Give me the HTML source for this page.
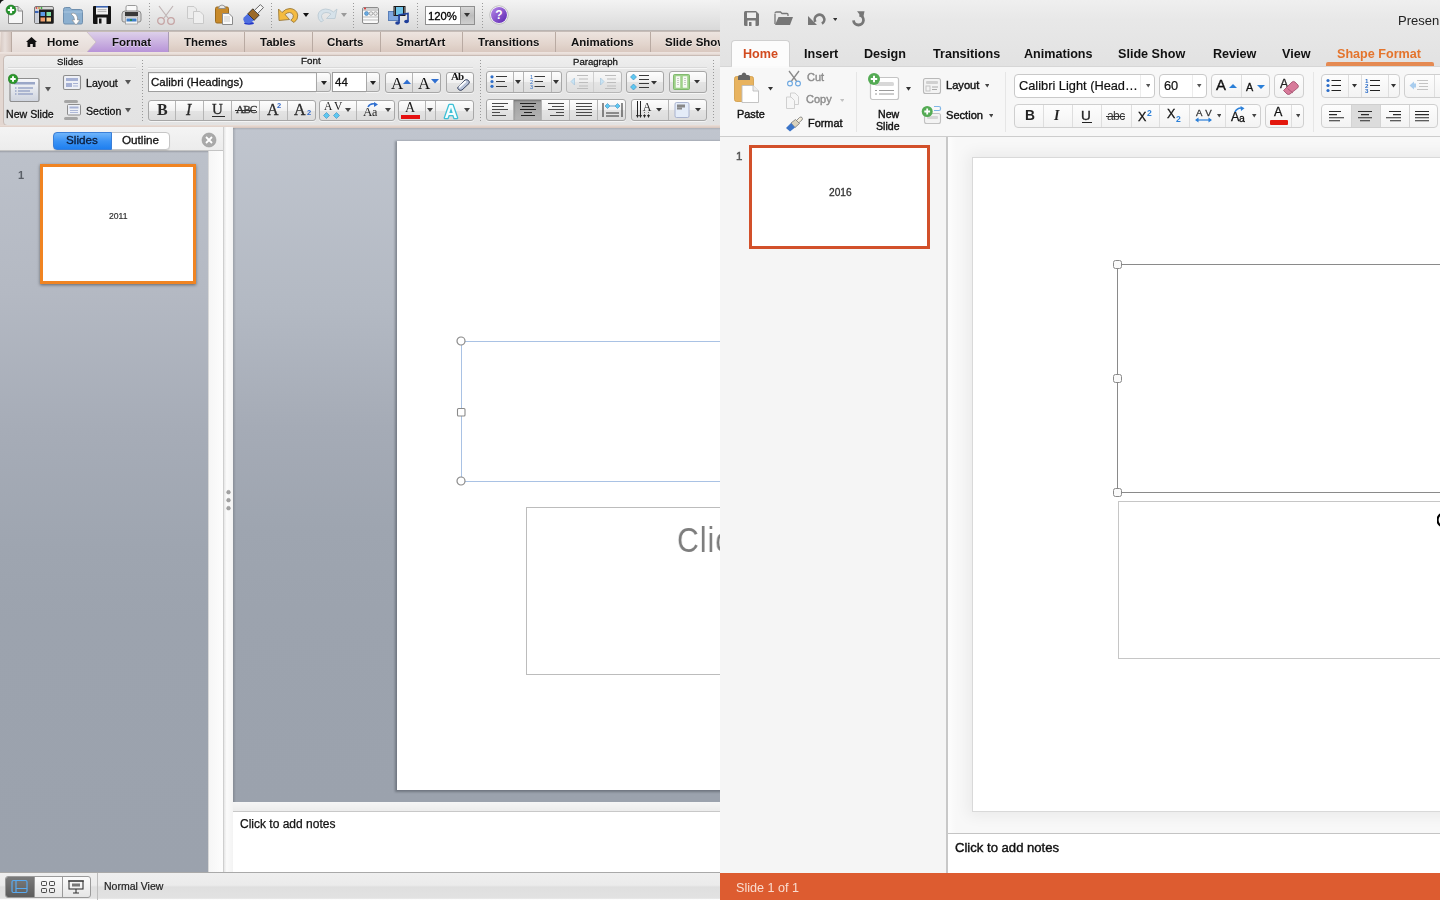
<!DOCTYPE html>
<html><head><meta charset="utf-8">
<style>
*{margin:0;padding:0;box-sizing:border-box}
html,body{width:1440px;height:900px;overflow:hidden;background:#fff;font-family:"Liberation Sans",sans-serif}
.a{position:absolute;display:block}
.t{position:absolute;white-space:nowrap;line-height:1;will-change:transform}
</style></head><body>
<div class="a" style="left:0;top:0;width:720px;height:900px;overflow:hidden">
<div class="a" style="left:0px;top:0px;width:720px;height:31px;background:linear-gradient(#f3f3f3,#e4e4e4 60%,#d9d9d9);border-bottom:1px solid #b9b4b2"></div>
<svg class="a" style="left:0px;top:0px;" width="4" height="4" viewBox="0 0 4 4"><path d="M0 0H4Q1 1 0 4Z" fill="#111"/></svg>
<svg class="a" style="left:5px;top:4px;" width="20" height="21" viewBox="0 0 20 21"><path d="M3.5 2.5H13L17.5 7V19.5H3.5Z" fill="#f6f6f6" stroke="#8a8a8a"/><path d="M13 2.5V7H17.5" fill="#ddd" stroke="#8a8a8a"/><circle cx="6" cy="6" r="5" fill="#22922a" stroke="#16661a" stroke-width=".5"/><path d="M6 2.8V9.2M2.8 6H9.2" stroke="#fff" stroke-width="2.2"/></svg>
<svg class="a" style="left:34px;top:6px;" width="20" height="18" viewBox="0 0 20 18"><rect x="0.5" y="0.5" width="19" height="17" rx="1.5" fill="#d8d8d8" stroke="#777"/><rect x="5" y="3.5" width="14.5" height="14" fill="#1b1b1b"/><rect x="1" y="4" width="3.5" height="13" fill="#c9cdd6"/><rect x="1" y="5" width="3.5" height="2" fill="#3a63b6"/><circle cx="2.5" cy="2" r="0.9" fill="#d44"/><circle cx="5" cy="2" r="0.9" fill="#c93"/><circle cx="7.5" cy="2" r="0.9" fill="#3a3"/><rect x="6.5" y="6" width="4.5" height="4" fill="#5b9be8"/><rect x="12.5" y="6" width="4.5" height="4" fill="#7fe0a8"/><rect x="6.5" y="11.5" width="4.5" height="4" fill="#f0a070"/><rect x="12.5" y="11.5" width="4.5" height="4" fill="#f8d090"/></svg>
<svg class="a" style="left:62px;top:5px;" width="22" height="21" viewBox="0 0 22 21"><path d="M1.5 4.5Q1.5 2.5 3.5 2.5H8L9.5 4.5H18.5Q20.5 4.5 20.5 6.5V17.5Q20.5 19 19 19H3Q1.5 19 1.5 17.5Z" fill="#8cb0d0" stroke="#6f8fae"/><path d="M1.5 7H20.5" stroke="#a9c6e0"/><path d="M11 8Q16 9 15.5 15H18L14 20L10 15H12.5Q12.5 11 9 9Z" fill="#fff" stroke="#888" stroke-width=".6"/></svg>
<svg class="a" style="left:92px;top:5px;" width="20" height="20" viewBox="0 0 20 20"><path d="M1 2Q1 1 2 1H18Q19 1 19 2V18Q19 19 18 19H2Q1 19 1 18Z" fill="#141414"/><rect x="4" y="1" width="12" height="8.5" fill="#f2f2f2"/><rect x="4" y="1" width="12" height="1.6" fill="#3d64b0"/><path d="M5.5 4.7H14.5M5.5 6.6H14.5" stroke="#9a9a9a" stroke-width=".8"/><rect x="5.5" y="12.5" width="9" height="6.5" fill="#e8e8e8"/><rect x="7" y="13.5" width="2.5" height="5" fill="#141414"/></svg>
<svg class="a" style="left:120px;top:4px;" width="23" height="22" viewBox="0 0 23 22"><rect x="6" y="1.5" width="11" height="6" rx="1.5" fill="#fafafa" stroke="#9a9a9a"/><path d="M2 10Q2 7 5 7H18Q21 7 21 10V16Q21 18 19 18H4Q2 18 2 16Z" fill="#d6d6d6" stroke="#8a8a8a"/><rect x="5" y="8" width="13" height="4" fill="#3a3a3a"/><rect x="5.5" y="13" width="12" height="7" fill="#f6f6f6" stroke="#888" stroke-width=".6"/><rect x="6.5" y="14.5" width="10" height="3" fill="#3f7fc9"/><circle cx="11" cy="16" r="1" fill="#2a8a2a"/></svg>
<div class="a" style="left:149px;top:3px;width:1px;height:26px;background:repeating-linear-gradient(#9a9a9a 0 1px,transparent 1px 3px)"></div>
<svg class="a" style="left:156px;top:5px;" width="20" height="20" viewBox="0 0 20 20"><path d="M3 1L12 13M17 1L8 13" stroke="#c0b5b5" stroke-width="1.2"/><circle cx="5" cy="16" r="3.3" fill="none" stroke="#c6a4a4" stroke-width="1.3"/><circle cx="15" cy="16" r="3.3" fill="none" stroke="#c6a4a4" stroke-width="1.3"/></svg>
<svg class="a" style="left:186px;top:5px;" width="19" height="20" viewBox="0 0 19 20"><path d="M1.5 1.5H8L10.5 4V13.5H1.5Z" fill="#ececec" stroke="#c9c9c9"/><path d="M7.5 6.5H14L17.5 10V18.5H7.5Z" fill="#efefef" stroke="#c9c9c9"/></svg>
<svg class="a" style="left:214px;top:4px;" width="20" height="21" viewBox="0 0 20 21"><rect x="1.5" y="3" width="13" height="16" rx="1.5" fill="#c88a2a" stroke="#9a6a1f"/><path d="M4.5 4.5Q5 1 8 1Q11 1 11.5 4.5Z" fill="#e9e9e9" stroke="#888" stroke-width=".8"/><path d="M8.5 9.5H15L18.5 13V20.5H8.5Z" fill="#f9f9f9" stroke="#8a8a8a"/><path d="M10 13H16M10 15H16M10 17H16" stroke="#bbb" stroke-width=".7"/></svg>
<svg class="a" style="left:242px;top:4px;" width="22" height="21" viewBox="0 0 22 21"><ellipse cx="7" cy="19.3" rx="5" ry="1.4" fill="#2236c8"/><path d="M5.8 9.8L12.2 16.2L7.5 19.5Q4 20 2 17.5Q0.5 15 1.8 13.5Z" fill="#4f6fe0"/><path d="M10.8 4.8L17.2 11.2L12.2 16.2L5.8 9.8Z" fill="#9c6a28" stroke="#222" stroke-width=".8"/><path d="M18.4 0.6L21.4 3.6L15.6 9.6L12.4 6.4Z" fill="#f6f6f6" stroke="#444" stroke-width=".8"/></svg>
<div class="a" style="left:271px;top:3px;width:1px;height:26px;background:repeating-linear-gradient(#9a9a9a 0 1px,transparent 1px 3px)"></div>
<svg class="a" style="left:277px;top:7px;" width="23" height="16" viewBox="0 0 23 16"><path d="M2 13.5L1.5 2L5 5.5Q8.5 1.5 13 1.5Q19.5 2 20.8 8Q21.2 12.5 17 15.5L13.8 13.2Q16.8 11 16.3 8.5Q15.5 5.5 12.5 5.5Q10 5.5 8 7.5L12.5 12.5Z" fill="#f4bb40" stroke="#9c7a3c" stroke-width=".9"/></svg>
<svg class="a" style="left:303px;top:13px;" width="6" height="4" viewBox="0 0 6 4"><path d="M0 0H6L3.0 4Z" fill="#111"/></svg>
<svg class="a" style="left:315px;top:7px;" width="23" height="16" viewBox="0 0 23 16"><path d="M20 11.5L22 2L18.5 5Q15 2 10.5 2Q4 2.5 3 8Q2.5 12 6 15L8.5 13.5Q6 11 6.5 8.5Q7.5 5.5 11 5.5Q14 5.5 16 7L11.5 11.5Z" fill="#d6e2ea" stroke="#bccbd4" stroke-width=".9"/></svg>
<svg class="a" style="left:341px;top:13px;" width="6" height="4" viewBox="0 0 6 4"><path d="M0 0H6L3.0 4Z" fill="#9a9a9a"/></svg>
<div class="a" style="left:353px;top:3px;width:1px;height:26px;background:repeating-linear-gradient(#9a9a9a 0 1px,transparent 1px 3px)"></div>
<svg class="a" style="left:361px;top:6px;" width="19" height="19" viewBox="0 0 19 19"><rect x="1.5" y="1.5" width="16" height="16" rx="1.5" fill="#fafafa" stroke="#8c8c8c"/><rect x="2" y="2" width="15" height="3" fill="#d0d0d0"/><circle cx="4" cy="2.5" r="1" fill="#d33"/><circle cx="5.5" cy="7.5" r="2" fill="#6aa8e0" stroke="#37a" stroke-width=".5"/><circle cx="10" cy="7.5" r="1.8" fill="#eee" stroke="#777" stroke-width=".6"/><circle cx="14.5" cy="7.5" r="1.8" fill="#eee" stroke="#777" stroke-width=".6"/><path d="M2 11H17M2 14H17" stroke="#bbb" stroke-width="1"/></svg>
<svg class="a" style="left:388px;top:5px;" width="22" height="21" viewBox="0 0 22 21"><rect x="0.5" y="6.5" width="11" height="9" fill="#7fa8e0" stroke="#5a7fb8"/><rect x="5.5" y="1" width="12" height="10" fill="#1a1a1a"/><rect x="8" y="2" width="7" height="8" fill="#6fc3e8"/><path d="M6.5 2.5V10M16.5 2.5V10" stroke="#ddd" stroke-width=".8" stroke-dasharray="1 1"/><path d="M11 18V10L20 8.5V16.5" fill="none" stroke="#1f3f9a" stroke-width="1.6"/><ellipse cx="9.5" cy="18" rx="2.3" ry="1.8" fill="#1f3f9a"/><ellipse cx="18.5" cy="16.5" rx="2.3" ry="1.8" fill="#1f3f9a"/></svg>
<div class="a" style="left:417px;top:3px;width:1px;height:26px;background:repeating-linear-gradient(#9a9a9a 0 1px,transparent 1px 3px)"></div>
<div class="a" style="left:425px;top:6px;width:50px;height:19px;background:#fff;border:1px solid #8f8f8f"></div>
<div class="a" style="left:460px;top:7px;width:14px;height:17px;background:linear-gradient(#d8d8d8,#bdbdbd 50%,#cfcfcf);border-left:1px solid #9a9a9a"></div>
<svg class="a" style="left:464px;top:13px;" width="6" height="4" viewBox="0 0 6 4"><path d="M0 0H6L3.0 4Z" fill="#333"/></svg>
<div class="t" style="left:427.50px;top:10.63px;font-size:11.3px;color:#000;font-weight:normal;font-family:'Liberation Sans',sans-serif;-webkit-text-stroke:.3px #000">120%</div>
<div class="a" style="left:482px;top:3px;width:1px;height:26px;background:repeating-linear-gradient(#9a9a9a 0 1px,transparent 1px 3px)"></div>
<svg class="a" style="left:489px;top:5px;" width="20" height="20" viewBox="0 0 20 20"><defs><linearGradient id="hg" x1="0" y1="0" x2="1" y2="1"><stop offset="0" stop-color="#b78ae8"/><stop offset="1" stop-color="#5a22b0"/></linearGradient></defs><circle cx="10" cy="10" r="9.2" fill="#fff" stroke="#9a9a9a" stroke-width=".6"/><circle cx="10" cy="10" r="8" fill="url(#hg)"/><text x="10" y="14" text-anchor="middle" font-family="Liberation Sans" font-weight="bold" font-size="12" fill="#fff">?</text></svg>
<div class="a" style="left:0px;top:31px;width:720px;height:22px;background:linear-gradient(#ede4df,#e2d4cc 60%,#d8c7be);border-top:1px solid #c6bcb7"></div>
<div class="a" style="left:1px;top:32px;width:11px;height:20px;background:linear-gradient(90deg,#d9ccc6,#e8dfdb 40%,#d5c6bf);border-right:1px solid #b9aaa2"></div>
<svg class="a" style="left:86px;top:32px;" width="84" height="21" viewBox="0 0 84 21"><defs><linearGradient id="pg" x1="0" y1="0" x2="0" y2="1"><stop offset="0" stop-color="#ddd0ea"/><stop offset="1" stop-color="#b894d8"/></linearGradient></defs><rect x="0" y="0" width="82" height="20" fill="url(#pg)"/><path d="M82.5 0V20" stroke="#a99bb5"/></svg>
<svg class="a" style="left:12px;top:32px;" width="86" height="21" viewBox="0 0 86 21"><defs><linearGradient id="hm" x1="0" y1="0" x2="0" y2="1"><stop offset="0" stop-color="#f1ebe8"/><stop offset="1" stop-color="#e5dbd7"/></linearGradient></defs><path d="M0 0H75L84 10L75 20H0Z" fill="url(#hm)"/><path d="M75 0L84 10L75 20" fill="none" stroke="#c9bcc2" stroke-width=".8"/></svg>
<svg class="a" style="left:26px;top:36.5px;" width="11" height="10" viewBox="0 0 11 10"><path d="M5.5 0L11 5H9.5V10H6.8V7H4.2V10H1.5V5H0Z" fill="#111"/></svg>
<div class="a" style="left:244px;top:32px;width:1px;height:20px;background:#b9aaa2"></div>
<div class="a" style="left:312px;top:32px;width:1px;height:20px;background:#b9aaa2"></div>
<div class="a" style="left:380px;top:32px;width:1px;height:20px;background:#b9aaa2"></div>
<div class="a" style="left:462px;top:32px;width:1px;height:20px;background:#b9aaa2"></div>
<div class="a" style="left:555px;top:32px;width:1px;height:20px;background:#b9aaa2"></div>
<div class="a" style="left:650px;top:32px;width:1px;height:20px;background:#b9aaa2"></div>
<div class="t" style="left:46.50px;top:37.27px;font-size:11.5px;color:#111;font-weight:bold;font-family:'Liberation Sans',sans-serif;text-shadow:0 1px 0 rgba(255,255,255,.55)">Home</div>
<div class="t" style="left:112.00px;top:37.27px;font-size:11.5px;color:#111;font-weight:bold;font-family:'Liberation Sans',sans-serif;text-shadow:0 1px 0 rgba(255,255,255,.55)">Format</div>
<div class="t" style="left:184.00px;top:37.27px;font-size:11.5px;color:#111;font-weight:bold;font-family:'Liberation Sans',sans-serif;text-shadow:0 1px 0 rgba(255,255,255,.55)">Themes</div>
<div class="t" style="left:260.00px;top:37.27px;font-size:11.5px;color:#111;font-weight:bold;font-family:'Liberation Sans',sans-serif;text-shadow:0 1px 0 rgba(255,255,255,.55)">Tables</div>
<div class="t" style="left:327.00px;top:37.27px;font-size:11.5px;color:#111;font-weight:bold;font-family:'Liberation Sans',sans-serif;text-shadow:0 1px 0 rgba(255,255,255,.55)">Charts</div>
<div class="t" style="left:396.00px;top:37.27px;font-size:11.5px;color:#111;font-weight:bold;font-family:'Liberation Sans',sans-serif;text-shadow:0 1px 0 rgba(255,255,255,.55)">SmartArt</div>
<div class="t" style="left:478.00px;top:37.27px;font-size:11.5px;color:#111;font-weight:bold;font-family:'Liberation Sans',sans-serif;text-shadow:0 1px 0 rgba(255,255,255,.55)">Transitions</div>
<div class="t" style="left:571.00px;top:37.27px;font-size:11.5px;color:#111;font-weight:bold;font-family:'Liberation Sans',sans-serif;text-shadow:0 1px 0 rgba(255,255,255,.55)">Animations</div>
<div class="t" style="left:665.00px;top:37.27px;font-size:11.5px;color:#111;font-weight:bold;font-family:'Liberation Sans',sans-serif;text-shadow:0 1px 0 rgba(255,255,255,.55)">Slide Show</div>
<div class="a" style="left:0px;top:52px;width:720px;height:3px;background:linear-gradient(#eee5e1,#e6dad4)"></div>
<div class="a" style="left:0px;top:54px;width:720px;height:73px;background:#e3d7d1"></div>
<div class="a" style="left:3px;top:55px;width:730px;height:71px;background:linear-gradient(#efefef,#e9e9e9 18%,#e6e6e6 19%,#e3e3e3);border:1px solid #c9bcb6;border-radius:4px"></div>
<div class="a" style="left:8px;top:67px;width:128px;height:1px;background:#d9d9d9;box-shadow:0 1px 0 #f6f6f6"></div>
<div class="a" style="left:148px;top:67px;width:325px;height:1px;background:#d9d9d9;box-shadow:0 1px 0 #f6f6f6"></div>
<div class="a" style="left:487px;top:67px;width:220px;height:1px;background:#d9d9d9;box-shadow:0 1px 0 #f6f6f6"></div>
<div class="t" style="left:57.00px;top:56.57px;font-size:9.6px;color:#1e1e1e;font-weight:normal;font-family:'Liberation Sans',sans-serif;text-shadow:0 1px 0 #fff;-webkit-text-stroke:.3px #111">Slides</div>
<div class="t" style="left:300.50px;top:56.40px;font-size:9.8px;color:#1e1e1e;font-weight:normal;font-family:'Liberation Sans',sans-serif;text-shadow:0 1px 0 #fff;-webkit-text-stroke:.3px #111">Font</div>
<div class="t" style="left:573.00px;top:56.57px;font-size:9.6px;color:#1e1e1e;font-weight:normal;font-family:'Liberation Sans',sans-serif;text-shadow:0 1px 0 #fff;-webkit-text-stroke:.3px #111">Paragraph</div>
<div class="a" style="left:142px;top:60px;width:1px;height:63px;background:repeating-linear-gradient(#9a9a9a 0 1px,transparent 1px 3px)"></div>
<div class="a" style="left:480px;top:60px;width:1px;height:63px;background:repeating-linear-gradient(#9a9a9a 0 1px,transparent 1px 3px)"></div>
<div class="a" style="left:713px;top:60px;width:1px;height:63px;background:repeating-linear-gradient(#9a9a9a 0 1px,transparent 1px 3px)"></div>
<div class="a" style="left:0px;top:125px;width:720px;height:3px;background:linear-gradient(#eadfd9,#d8c6bd)"></div>
<svg class="a" style="left:8px;top:72px;" width="34" height="32" viewBox="0 0 34 32"><defs><linearGradient id="ns" x1="0" y1="0" x2="0" y2="1"><stop offset="0" stop-color="#f7f8fb"/><stop offset="1" stop-color="#cfd4de"/></linearGradient></defs><rect x="2" y="6.5" width="29" height="23" rx="1.5" fill="url(#ns)" stroke="#8e8e8e" stroke-width="1.2"/><rect x="6" y="10" width="21" height="2.5" fill="#9aa7c8"/><path d="M10 16H25M10 19H22M10 22H25" stroke="#9aa7c8" stroke-width="1.4"/><path d="M7 16H8.5M7 19H8.5M7 22H8.5" stroke="#9aa7c8" stroke-width="1.4"/><circle cx="5" cy="7" r="4.8" fill="#2b9a2b" stroke="#1a6a1a" stroke-width=".5"/><path d="M5 4.3V9.7M2.3 7H7.7" stroke="#fff" stroke-width="1.9"/></svg>
<svg class="a" style="left:45px;top:87px;" width="6" height="4.5" viewBox="0 0 6 4.5"><path d="M0 0H6L3.0 4.5Z" fill="#555"/></svg>
<div class="t" style="left:6.00px;top:109.03px;font-size:10.6px;color:#111;font-weight:normal;font-family:'Liberation Sans',sans-serif;text-shadow:0 1px 0 #fff;-webkit-text-stroke:.3px #111">New Slide</div>
<svg class="a" style="left:62px;top:74px;" width="20" height="17" viewBox="0 0 20 17"><rect x="1.5" y="1.5" width="17" height="14" rx="1.5" fill="#eef0f6" stroke="#8d8d8d" stroke-width="1.1"/><rect x="4" y="4" width="12" height="3" fill="#a6b1d4"/><rect x="4" y="9" width="6" height="4" fill="#a6b1d4"/><path d="M11 9.5H16M11 12H16" stroke="#a6b1d4"/></svg>
<div class="t" style="left:86.00px;top:77.63px;font-size:10.6px;color:#111;font-weight:normal;font-family:'Liberation Sans',sans-serif;text-shadow:0 1px 0 #fff;-webkit-text-stroke:.3px #111">Layout</div>
<svg class="a" style="left:125px;top:80px;" width="6" height="4.5" viewBox="0 0 6 4.5"><path d="M0 0H6L3.0 4.5Z" fill="#555"/></svg>
<svg class="a" style="left:62px;top:99px;" width="20" height="22" viewBox="0 0 20 22"><rect x="2" y="1" width="14" height="3" rx="1.5" fill="#a5a5a5"/><rect x="2" y="18" width="14" height="3" rx="1.5" fill="#a5a5a5"/><rect x="5.5" y="5.5" width="13" height="10.5" rx="1" fill="#eef0f6" stroke="#8d8d8d"/><rect x="7.5" y="7.5" width="9" height="2" fill="#a6b1d4"/><path d="M8 11.5H16M8 13.5H16" stroke="#a6b1d4" stroke-width=".9"/></svg>
<div class="t" style="left:86.00px;top:105.53px;font-size:10.6px;color:#111;font-weight:normal;font-family:'Liberation Sans',sans-serif;text-shadow:0 1px 0 #fff;-webkit-text-stroke:.3px #111">Section</div>
<svg class="a" style="left:125px;top:108px;" width="6" height="4.5" viewBox="0 0 6 4.5"><path d="M0 0H6L3.0 4.5Z" fill="#555"/></svg>
<div class="a" style="left:148px;top:72px;width:169px;height:20px;background:#fff;border:1px solid #9d9d9d;box-shadow:inset 0 1px 1px rgba(0,0,0,.08)"></div>
<div class="t" style="left:151.00px;top:76.57px;font-size:11.5px;color:#111;font-weight:normal;font-family:'Liberation Sans',sans-serif;-webkit-text-stroke:.3px #111">Calibri (Headings)</div>
<div class="a" style="left:316px;top:72px;width:15px;height:20px;background:linear-gradient(#fdfdfd,#f1f1f1 50%,#e4e4e4 51%,#dcdcdc);border:1px solid #a7a7a7;border-radius:0 3px 3px 0;box-shadow:0 1px 0 rgba(255,255,255,.6);"></div>
<svg class="a" style="left:320.5px;top:81px;" width="6" height="4" viewBox="0 0 6 4"><path d="M0 0H6L3.0 4Z" fill="#222"/></svg>
<div class="a" style="left:332px;top:72px;width:35px;height:20px;background:#fff;border:1px solid #9d9d9d"></div>
<div class="t" style="left:335.00px;top:76.57px;font-size:11.5px;color:#111;font-weight:normal;font-family:'Liberation Sans',sans-serif;-webkit-text-stroke:.3px #111">44</div>
<div class="a" style="left:366px;top:72px;width:14px;height:20px;background:linear-gradient(#fdfdfd,#f1f1f1 50%,#e4e4e4 51%,#dcdcdc);border:1px solid #a7a7a7;border-radius:0 3px 3px 0;box-shadow:0 1px 0 rgba(255,255,255,.6);"></div>
<svg class="a" style="left:370px;top:81px;" width="6" height="4" viewBox="0 0 6 4"><path d="M0 0H6L3.0 4Z" fill="#222"/></svg>
<div class="a" style="left:385px;top:72px;width:56px;height:21px;background:linear-gradient(#fdfdfd,#f1f1f1 50%,#e4e4e4 51%,#dcdcdc);border:1px solid #a7a7a7;border-radius:3px;box-shadow:0 1px 0 rgba(255,255,255,.6);"></div>
<div class="a" style="left:412px;top:73px;width:1px;height:19px;background:#b5b5b5"></div>
<div class="t" style="left:391.00px;top:74.61px;font-size:17px;color:#111;font-weight:normal;font-family:'Liberation Serif',serif;">A</div>
<svg class="a" style="left:403px;top:79px;" width="8" height="5" viewBox="0 0 8 5"><path d="M0 5L4 0.5L8 5Z" fill="#2f6fd0"/></svg>
<div class="t" style="left:418.00px;top:74.61px;font-size:17px;color:#111;font-weight:normal;font-family:'Liberation Serif',serif;">A</div>
<svg class="a" style="left:431px;top:79px;" width="8" height="5" viewBox="0 0 8 5"><path d="M0 0H8L4 4.5Z" fill="#2f6fd0"/></svg>
<div class="a" style="left:446px;top:72px;width:28px;height:21px;background:linear-gradient(#fdfdfd,#f1f1f1 50%,#e4e4e4 51%,#dcdcdc);border:1px solid #a7a7a7;border-radius:3px;box-shadow:0 1px 0 rgba(255,255,255,.6);"></div>
<div class="t" style="left:451.00px;top:70.69px;font-size:11px;color:#111;font-weight:bold;font-family:'Liberation Serif',serif;letter-spacing:-1px">Ab</div>
<svg class="a" style="left:455px;top:78px;" width="16" height="13" viewBox="0 0 16 13"><path d="M3 9L10 2Q12 1 13.5 2.5Q15 4 14 5.5L7 12Q5 13 3.5 11.5Q2 10 3 9Z" fill="#b9c4da" stroke="#3a4560" stroke-width="1"/><path d="M4 9.5L10.5 3.5" stroke="#eef2f8" stroke-width="2"/><path d="M5 8L11 3" stroke="#fff" stroke-width="1.2"/></svg>
<div class="a" style="left:148px;top:100px;width:168px;height:21px;background:linear-gradient(#fdfdfd,#f1f1f1 50%,#e4e4e4 51%,#dcdcdc);border:1px solid #a7a7a7;border-radius:3px;box-shadow:0 1px 0 rgba(255,255,255,.6);"></div>
<div class="a" style="left:175px;top:101px;width:1px;height:19px;background:#b5b5b5"></div>
<div class="a" style="left:203px;top:101px;width:1px;height:19px;background:#b5b5b5"></div>
<div class="a" style="left:231px;top:101px;width:1px;height:19px;background:#b5b5b5"></div>
<div class="a" style="left:259px;top:101px;width:1px;height:19px;background:#b5b5b5"></div>
<div class="a" style="left:287px;top:101px;width:1px;height:19px;background:#b5b5b5"></div>
<div class="t" style="left:156.50px;top:102.26px;font-size:16px;color:#2a2a2a;font-weight:bold;font-family:'Liberation Serif',serif;">B</div>
<div class="t" style="left:186.00px;top:102.26px;font-size:16px;color:#2a2a2a;font-weight:normal;font-family:'Liberation Serif',serif;font-style:italic;-webkit-text-stroke:.3px #2a2a2a">I</div>
<div class="t" style="left:212.30px;top:101.50px;font-size:15px;color:#2a2a2a;font-weight:normal;font-family:'Liberation Serif',serif;-webkit-text-stroke:.3px #2a2a2a">U</div>
<div class="a" style="left:212px;top:115.5px;width:13px;height:1px;background:#2a2a2a"></div>
<div class="t" style="left:235.50px;top:103.73px;font-size:11.3px;color:#333;font-weight:normal;font-family:'Liberation Serif',serif;letter-spacing:-1px;-webkit-text-stroke:.3px #333">ABC</div>
<div class="a" style="left:235px;top:109.5px;width:21px;height:1px;background:#333"></div>
<div class="t" style="left:267.00px;top:102.26px;font-size:16px;color:#2a2a2a;font-weight:normal;font-family:'Liberation Serif',serif;-webkit-text-stroke:.3px #2a2a2a">A</div>
<div class="t" style="left:276.60px;top:102.15px;font-size:7.5px;color:#2f66c8;font-weight:bold;font-family:'Liberation Sans',sans-serif;">2</div>
<div class="t" style="left:294.00px;top:102.26px;font-size:16px;color:#2a2a2a;font-weight:normal;font-family:'Liberation Serif',serif;-webkit-text-stroke:.3px #2a2a2a">A</div>
<div class="t" style="left:306.80px;top:109.45px;font-size:7.5px;color:#2f66c8;font-weight:bold;font-family:'Liberation Sans',sans-serif;">2</div>
<div class="a" style="left:319px;top:100px;width:76px;height:21px;background:linear-gradient(#fdfdfd,#f1f1f1 50%,#e4e4e4 51%,#dcdcdc);border:1px solid #a7a7a7;border-radius:3px;box-shadow:0 1px 0 rgba(255,255,255,.6);"></div>
<div class="a" style="left:356px;top:101px;width:1px;height:19px;background:#b5b5b5"></div>
<div class="t" style="left:324.00px;top:101.27px;font-size:11.5px;color:#222;font-weight:normal;font-family:'Liberation Serif',serif;">A</div>
<div class="t" style="left:333.50px;top:101.27px;font-size:11.5px;color:#222;font-weight:normal;font-family:'Liberation Serif',serif;">V</div>
<svg class="a" style="left:323px;top:112px;" width="24" height="7" viewBox="0 0 24 7"><path d="M3.5 0.5L6.5 3.5L3.5 6.5L0.5 3.5Z" fill="#5ec8f0" stroke="#3a8ac0" stroke-width=".6"/><path d="M13.5 0.5L16.5 3.5L13.5 6.5L10.5 3.5Z" fill="#5ec8f0" stroke="#3a8ac0" stroke-width=".6"/></svg>
<svg class="a" style="left:345px;top:108px;" width="6" height="4" viewBox="0 0 6 4"><path d="M0 0H6L3.0 4Z" fill="#444"/></svg>
<div class="t" style="left:363.00px;top:105.00px;font-size:13px;color:#222;font-weight:normal;font-family:'Liberation Serif',serif;">A</div>
<div class="t" style="left:372.00px;top:105.84px;font-size:12px;color:#222;font-weight:normal;font-family:'Liberation Serif',serif;">a</div>
<svg class="a" style="left:367px;top:102px;" width="12" height="6" viewBox="0 0 12 6"><path d="M1 5Q3 1 8 2" fill="none" stroke="#2f6fd0" stroke-width="1.5"/><path d="M7 0L11 2.5L7 5Z" fill="#2f6fd0"/></svg>
<svg class="a" style="left:385px;top:108px;" width="6" height="4" viewBox="0 0 6 4"><path d="M0 0H6L3.0 4Z" fill="#444"/></svg>
<div class="a" style="left:398px;top:100px;width:76px;height:21px;background:linear-gradient(#fdfdfd,#f1f1f1 50%,#e4e4e4 51%,#dcdcdc);border:1px solid #a7a7a7;border-radius:3px;box-shadow:0 1px 0 rgba(255,255,255,.6);"></div>
<div class="a" style="left:425px;top:101px;width:1px;height:19px;background:#b5b5b5"></div>
<div class="a" style="left:435px;top:101px;width:1px;height:19px;background:#b5b5b5"></div>
<div class="t" style="left:404.50px;top:101.15px;font-size:14px;color:#222;font-weight:normal;font-family:'Liberation Serif',serif;">A</div>
<div class="a" style="left:401px;top:114.5px;width:19px;height:4.5px;background:#e51010"></div>
<svg class="a" style="left:427px;top:108px;" width="6" height="4" viewBox="0 0 6 4"><path d="M0 0H6L3.0 4Z" fill="#444"/></svg>
<svg class="a" style="left:441px;top:101px;" width="20" height="19" viewBox="0 0 20 19"><text x="10" y="16.5" text-anchor="middle" font-family="Liberation Sans" font-weight="bold" font-size="18" fill="#f4feff" stroke="#3cc0d6" stroke-width="2.6" paint-order="stroke" stroke-linejoin="round">A</text></svg>
<svg class="a" style="left:464px;top:108px;" width="6" height="4" viewBox="0 0 6 4"><path d="M0 0H6L3.0 4Z" fill="#444"/></svg>
<div class="a" style="left:486px;top:71px;width:76px;height:22px;background:linear-gradient(#fdfdfd,#f1f1f1 50%,#e4e4e4 51%,#dcdcdc);border:1px solid #a7a7a7;border-radius:3px;box-shadow:0 1px 0 rgba(255,255,255,.6);"></div>
<div class="a" style="left:513px;top:72px;width:1px;height:20px;background:#b5b5b5"></div>
<div class="a" style="left:523px;top:72px;width:1px;height:20px;background:#b5b5b5"></div>
<div class="a" style="left:551px;top:72px;width:1px;height:20px;background:#b5b5b5"></div>
<svg class="a" style="left:490px;top:75px;" width="20" height="13" viewBox="0 0 20 13"><circle cx="2" cy="1.8" r="1.6" fill="#2d6dc8"/><circle cx="2" cy="6.5" r="1.6" fill="#2d6dc8"/><circle cx="2" cy="11.3" r="1.6" fill="#2d6dc8"/><path d="M6 1.5H17M6 6.5H15M6 11.5H17" stroke="#3a3a3a" stroke-width="1"/></svg>
<svg class="a" style="left:515px;top:80px;" width="6" height="4" viewBox="0 0 6 4"><path d="M0 0H6L3.0 4Z" fill="#333"/></svg>
<svg class="a" style="left:528px;top:74px;" width="20" height="15" viewBox="0 0 20 15"><text x="2" y="5" font-family="Liberation Sans" font-size="5.5" fill="#2d6dc8">1</text><text x="2" y="10" font-family="Liberation Sans" font-size="5.5" fill="#2d6dc8">2</text><text x="2" y="15" font-family="Liberation Sans" font-size="5.5" fill="#2d6dc8">3</text><path d="M6.5 2.5H17M6.5 7.5H15M6.5 12.5H17" stroke="#3a3a3a" stroke-width="1"/></svg>
<svg class="a" style="left:553px;top:80px;" width="6" height="4" viewBox="0 0 6 4"><path d="M0 0H6L3.0 4Z" fill="#333"/></svg>
<div class="a" style="left:566px;top:71px;width:56px;height:22px;background:linear-gradient(#fdfdfd,#f1f1f1 50%,#e4e4e4 51%,#dcdcdc);border:1px solid #a7a7a7;border-radius:3px;box-shadow:0 1px 0 rgba(255,255,255,.6);opacity:.75"></div>
<div class="a" style="left:593px;top:72px;width:1px;height:20px;background:#cfcfcf"></div>
<svg class="a" style="left:570px;top:74px;" width="20" height="15" viewBox="0 0 20 15"><path d="M7 1.5H18M9 5H18M9 8.5H18M9 12H18M7 14.5H18" stroke="#bdbdbd" stroke-width="1"/><path d="M1 7.5L4.5 4V11Z" fill="#c8e4f4" stroke="#9fbfd8" stroke-width=".6"/></svg>
<svg class="a" style="left:598px;top:74px;" width="20" height="15" viewBox="0 0 20 15"><path d="M7 1.5H18M9 5H18M9 8.5H18M9 12H18M7 14.5H18" stroke="#bdbdbd" stroke-width="1"/><path d="M6 7.5L2.5 4V11Z" fill="#c8e4f4" stroke="#9fbfd8" stroke-width=".6"/></svg>
<div class="a" style="left:626px;top:71px;width:38px;height:22px;background:linear-gradient(#fdfdfd,#f1f1f1 50%,#e4e4e4 51%,#dcdcdc);border:1px solid #a7a7a7;border-radius:3px;box-shadow:0 1px 0 rgba(255,255,255,.6);"></div>
<svg class="a" style="left:630px;top:73px;" width="30" height="18" viewBox="0 0 30 18"><path d="M3.5 1L6.5 4L3.5 7L0.5 4Z" fill="#5ec8f0" stroke="#3a8ac0" stroke-width=".6"/><path d="M3.5 11L6.5 14L3.5 17L0.5 14Z" fill="#5ec8f0" stroke="#3a8ac0" stroke-width=".6"/><path d="M9 2.5H19M9 6.5H19M9 10.5H19M9 14.5H19" stroke="#3a3a3a" stroke-width="1.2"/><path d="M21 8H27L24 11.5Z" fill="#333"/></svg>
<div class="a" style="left:669px;top:71px;width:38px;height:22px;background:linear-gradient(#fdfdfd,#f1f1f1 50%,#e4e4e4 51%,#dcdcdc);border:1px solid #a7a7a7;border-radius:3px;box-shadow:0 1px 0 rgba(255,255,255,.6);"></div>
<svg class="a" style="left:673px;top:74px;" width="30" height="16" viewBox="0 0 30 16"><rect x="0.5" y="0.5" width="16" height="15" rx="1" fill="#9fd38a" stroke="#6fae5a" stroke-width=".8"/><rect x="2.5" y="2" width="5" height="12" fill="#f6fbf3" stroke="#9bc98a" stroke-width=".5"/><rect x="9.5" y="2" width="5" height="12" fill="#f6fbf3" stroke="#9bc98a" stroke-width=".5"/><path d="M4 4.5H6M4 6.5H6M4 8.5H6M4 10.5H6M11 4.5H13M11 6.5H13M11 8.5H13M11 10.5H13" stroke="#aaa" stroke-width=".6"/><path d="M21 6H27L24 9.5Z" fill="#333"/></svg>
<div class="a" style="left:486px;top:99px;width:140px;height:22px;background:linear-gradient(#fdfdfd,#f1f1f1 50%,#e4e4e4 51%,#dcdcdc);border:1px solid #a7a7a7;border-radius:3px;box-shadow:0 1px 0 rgba(255,255,255,.6);"></div>
<div class="a" style="left:514px;top:100px;width:28px;height:20px;background:linear-gradient(#a0a0a0,#b4b4b4);box-shadow:inset 0 1px 2px rgba(0,0,0,.3)"></div>
<div class="a" style="left:513px;top:100px;width:1px;height:20px;background:#b5b5b5"></div>
<div class="a" style="left:541px;top:100px;width:1px;height:20px;background:#b5b5b5"></div>
<div class="a" style="left:569px;top:100px;width:1px;height:20px;background:#b5b5b5"></div>
<div class="a" style="left:597px;top:100px;width:1px;height:20px;background:#b5b5b5"></div>
<svg class="a" style="left:492px;top:103px;" width="20" height="15" viewBox="0 0 20 15"><path d="M0 0.5H16M0 3.5H12M0 6.5H16M0 9.5H8M0 12.5H14" stroke="#4a4a4a" stroke-width="1"/></svg>
<svg class="a" style="left:520px;top:103px;" width="20" height="15" viewBox="0 0 20 15"><path d="M0 0.5H16M2 3.5H14M0 6.5H16M4 9.5H12M1 12.5H15" stroke="#222" stroke-width="1"/></svg>
<svg class="a" style="left:548px;top:103px;" width="20" height="15" viewBox="0 0 20 15"><path d="M0 0.5H16M4 3.5H16M0 6.5H16M8 9.5H16M2 12.5H16" stroke="#4a4a4a" stroke-width="1"/></svg>
<svg class="a" style="left:576px;top:103px;" width="20" height="15" viewBox="0 0 20 15"><path d="M0 0.5H16M0 3.5H16M0 6.5H16M0 9.5H16M0 12.5H16" stroke="#4a4a4a" stroke-width="1"/></svg>
<svg class="a" style="left:602px;top:102px;" width="22" height="16" viewBox="0 0 22 16"><path d="M1 1V15M20 1V15" stroke="#333" stroke-width="1.1"/><path d="M4 11H17M4 14H17" stroke="#333" stroke-width="1.1"/><path d="M5.5 1.5L8 4L5.5 6.5L3 4Z M15.5 1.5L18 4L15.5 6.5L13 4Z" fill="#5ec8f0" stroke="#3a8ac0" stroke-width=".6"/><path d="M8 4H13" stroke="#3a8ac0" stroke-width=".8"/></svg>
<div class="a" style="left:631px;top:99px;width:76px;height:22px;background:linear-gradient(#fdfdfd,#f1f1f1 50%,#e4e4e4 51%,#dcdcdc);border:1px solid #a7a7a7;border-radius:3px;box-shadow:0 1px 0 rgba(255,255,255,.6);"></div>
<div class="a" style="left:668px;top:100px;width:1px;height:20px;background:#b5b5b5"></div>
<svg class="a" style="left:636px;top:101px;" width="30" height="18" viewBox="0 0 30 18"><path d="M1.5 0V14M4.5 0V14" stroke="#222" stroke-width="1"/><text x="11" y="10" text-anchor="middle" font-family="Liberation Serif" font-size="12" fill="#222">A</text><path d="M0 14H3L1.5 17ZM3 14H6L4.5 17ZM7 14H10L8.5 17ZM11 14H14L12.5 17Z" fill="#222"/><path d="M8.5 11V14M12.5 11V14" stroke="#222" stroke-width=".6" stroke-dasharray="1 1"/><path d="M20 7H26L23 10.5Z" fill="#333"/></svg>
<svg class="a" style="left:674px;top:101px;" width="30" height="18" viewBox="0 0 30 18"><rect x="1" y="1.5" width="14" height="15" rx="1.5" fill="#e4ecf8" stroke="#9aa6c6" stroke-width=".8"/><rect x="3" y="3.5" width="8" height="3" fill="#888"/><rect x="3" y="6.5" width="5" height="2" fill="#888"/><path d="M21 7H27L24 10.5Z" fill="#333"/></svg>
<div class="a" style="left:0px;top:127px;width:223px;height:24px;background:linear-gradient(#f4f4f4,#ececec);border-bottom:1px solid #c4c4c4"></div>
<div class="a" style="left:53px;top:132px;width:117px;height:18px;background:#fff;border:1px solid #c6c6c6;border-radius:4px;box-shadow:0 1px 1px rgba(0,0,0,.08)"></div>
<div class="a" style="left:53px;top:132px;width:59px;height:18px;background:linear-gradient(#6fb5fb,#3b93f5 50%,#1f7ff0);border:1px solid #3a7fd8;border-radius:4px 0 0 4px"></div>
<div class="t" style="left:66.00px;top:134.10px;font-size:11.7px;color:#0c1c38;font-weight:normal;font-family:'Liberation Sans',sans-serif;-webkit-text-stroke:.3px #0c1c38">Slides</div>
<div class="t" style="left:121.50px;top:134.10px;font-size:11.7px;color:#111;font-weight:normal;font-family:'Liberation Sans',sans-serif;-webkit-text-stroke:.3px #111">Outline</div>
<svg class="a" style="left:201px;top:132px;" width="16" height="16" viewBox="0 0 16 16"><circle cx="8" cy="8" r="7" fill="#a9a9a9" stroke="#959595" stroke-width=".6"/><path d="M5 5L11 11M11 5L5 11" stroke="#fff" stroke-width="1.8"/></svg>
<div class="a" style="left:0px;top:151px;width:208px;height:721px;background:linear-gradient(#bcc1ca 0px,#b4b9c3 140px,#a6acb7 280px,#9ea5b0 400px,#9ca3ae 470px,#9ba2ad 100%)"></div>
<div class="a" style="left:0px;top:151px;width:208px;height:2px;background:linear-gradient(rgba(0,0,0,.18),rgba(0,0,0,0))"></div>
<div class="a" style="left:208px;top:151px;width:15px;height:721px;background:linear-gradient(90deg,#f6f6f6,#fdfdfd);border-left:1px solid #d8d8d8"></div>
<div class="t" style="left:18.00px;top:169.69px;font-size:11px;color:#5a5f67;font-weight:bold;font-family:'Liberation Sans',sans-serif;">1</div>
<div class="a" style="left:40px;top:164px;width:156px;height:120px;background:#fff;border:3px solid #f08422;box-shadow:0 1px 3px rgba(0,0,0,.45)"></div>
<div class="t" style="left:108.50px;top:212.02px;font-size:8.6px;color:#333;font-weight:normal;font-family:'Liberation Sans',sans-serif;-webkit-text-stroke:.2px #333">2011</div>
<div class="a" style="left:223px;top:127px;width:10px;height:745px;background:linear-gradient(90deg,#e6e6e6,#fbfbfb 30%,#f3f3f3);border-left:1px solid #cfcfcf"></div>
<svg class="a" style="left:225.5px;top:488.5px;" width="5" height="22" viewBox="0 0 5 22"><circle cx="2.5" cy="3.2" r="1.9" fill="#a3a3a3" stroke="#8a8a8a" stroke-width=".4"/><circle cx="2.5" cy="11.2" r="1.9" fill="#a3a3a3" stroke="#8a8a8a" stroke-width=".4"/><circle cx="2.5" cy="19.2" r="1.9" fill="#a3a3a3" stroke="#8a8a8a" stroke-width=".4"/></svg>
<div class="a" style="left:233px;top:128px;width:487px;height:674px;background:linear-gradient(#c0c5ce 0px,#b3b9c3 180px,#a5abb6 300px,#9ea5b0 400px,#9ca3ae 480px,#9ba2ad 100%)"></div>
<div class="a" style="left:233px;top:128px;width:3px;height:674px;background:linear-gradient(90deg,rgba(0,0,0,.15),rgba(0,0,0,0))"></div>
<div class="a" style="left:233px;top:128px;width:487px;height:2px;background:linear-gradient(rgba(0,0,0,.12),rgba(0,0,0,0))"></div>
<div class="a" style="left:397px;top:141px;width:330px;height:649px;background:#fff;box-shadow:-1px 1px 2px 1px rgba(50,55,65,.4)"></div>
<div class="a" style="left:461px;top:341px;width:270px;height:141px;border:1px solid #a9c2e4"></div>
<svg class="a" style="left:456px;top:336px;" width="10" height="10" viewBox="0 0 10 10"><circle cx="5" cy="5" r="4" fill="#fff" stroke="#8a8a8a" stroke-width="1.2"/></svg>
<svg class="a" style="left:456px;top:476px;" width="10" height="10" viewBox="0 0 10 10"><circle cx="5" cy="5" r="4" fill="#fff" stroke="#8a8a8a" stroke-width="1.2"/></svg>
<svg class="a" style="left:456px;top:407px;" width="10" height="10" viewBox="0 0 10 10"><rect x="1.5" y="1.5" width="7.5" height="7.5" rx="1" fill="#fff" stroke="#8a8a8a" stroke-width="1.1"/></svg>
<div class="a" style="left:526px;top:507px;width:210px;height:168px;border:1px solid #bcbcbc"></div>
<div class="t" style="left:676.60px;top:521.57px;font-size:35px;color:#7d7d7d;font-weight:normal;font-family:'Liberation Sans',sans-serif;transform:scaleX(.86);transform-origin:0 0;letter-spacing:1.2px">Clic</div>
<div class="a" style="left:233px;top:802px;width:487px;height:9px;background:linear-gradient(#f6f6f6,#ececec)"></div>
<div class="a" style="left:233px;top:811px;width:487px;height:61px;background:#fff;border-top:1px solid #c8c8c8"></div>
<div class="t" style="left:240.00px;top:818.04px;font-size:12px;color:#111;font-weight:normal;font-family:'Liberation Sans',sans-serif;-webkit-text-stroke:.25px #111">Click to add notes</div>
<div class="a" style="left:0px;top:872px;width:720px;height:28px;background:linear-gradient(#efefef,#ebebeb 45%,#dfdfdf 52%,#e2e2e2 94%,#fafafa 96%,#fff);border-top:1px solid #a9a9a9"></div>
<div class="a" style="left:5px;top:876px;width:86px;height:22px;background:linear-gradient(#fbfbfb,#e6e6e6);border:1px solid #9a9a9a;border-radius:3px"></div>
<div class="a" style="left:6px;top:877px;width:28px;height:20px;background:linear-gradient(#7a7a7a,#5c5c5c);border-radius:2px 0 0 2px"></div>
<div class="a" style="left:34px;top:877px;width:1px;height:20px;background:#9a9a9a"></div>
<div class="a" style="left:62px;top:877px;width:1px;height:20px;background:#9a9a9a"></div>
<svg class="a" style="left:11px;top:879px;" width="18" height="15" viewBox="0 0 18 15"><rect x="1" y="1.5" width="15" height="12" rx="1.5" fill="none" stroke="#5aaaf0" stroke-width="1.2"/><path d="M5 1.5V13.5M5 9.5H16" stroke="#5aaaf0" stroke-width="1.2"/></svg>
<svg class="a" style="left:40px;top:880px;" width="16" height="14" viewBox="0 0 16 14"><rect x="1.5" y="1.5" width="5" height="4" rx=".8" fill="none" stroke="#333" stroke-width=".9"/><rect x="9.5" y="1.5" width="5" height="4" rx=".8" fill="none" stroke="#333" stroke-width=".9"/><rect x="1.5" y="8.5" width="5" height="4" rx=".8" fill="none" stroke="#333" stroke-width=".9"/><rect x="9.5" y="8.5" width="5" height="4" rx=".8" fill="none" stroke="#333" stroke-width=".9"/></svg>
<svg class="a" style="left:67px;top:879px;" width="18" height="16" viewBox="0 0 18 16"><rect x="2" y="2" width="14" height="8" fill="none" stroke="#333" stroke-width="1.1"/><path d="M1 2H17M9 10V14M6 14H12" stroke="#333" stroke-width="1.1"/><rect x="5" y="4.5" width="8" height="3" fill="#777"/></svg>
<div class="a" style="left:97px;top:873px;width:1px;height:27px;background:#bdbdbd"></div>
<div class="t" style="left:104.00px;top:881.11px;font-size:10.5px;color:#222;font-weight:normal;font-family:'Liberation Sans',sans-serif;-webkit-text-stroke:.2px #222">Normal View</div>
</div>
<div class="a" style="left:720px;top:0;width:720px;height:900px;overflow:hidden">
<div class="a" style="left:0px;top:0px;width:720px;height:66px;background:linear-gradient(#efefef,#e8e8e8 30%,#e2e2e2)"></div>
<svg class="a" style="left:23px;top:10px;" width="17" height="17" viewBox="0 0 17 17"><path d="M1 2.5Q1 1 2.5 1H13L16 4V14.5Q16 16 14.5 16H2.5Q1 16 1 14.5Z" fill="#777"/><rect x="4" y="2.5" width="9" height="5.5" fill="#eee"/><rect x="4.5" y="10.5" width="8" height="5.5" fill="#eee"/><rect x="6" y="12" width="2.5" height="4" fill="#777"/></svg>
<svg class="a" style="left:54px;top:11px;" width="20" height="15" viewBox="0 0 20 15"><path d="M1 2.5Q1 1 2.5 1H6.5L8 2.5H13Q14 2.5 14 3.5V5" fill="none" stroke="#777" stroke-width="1.3"/><path d="M1 3V13" stroke="#777" stroke-width="1.3"/><path d="M4.5 6H19L16 14H1Z" fill="#777"/></svg>
<svg class="a" style="left:86px;top:12px;" width="22" height="16" viewBox="0 0 22 16"><path d="M2 4V13H11Z" fill="#777"/><path d="M9.34 9.9A4.8 4.8 0 1 1 15.9 11.66" fill="none" stroke="#777" stroke-width="2.7"/></svg>
<svg class="a" style="left:112.5px;top:17.5px;" width="4.5" height="3" viewBox="0 0 4.5 3"><path d="M0 0H4.5L2.25 3Z" fill="#333"/></svg>
<svg class="a" style="left:130px;top:10px;" width="18" height="18" viewBox="0 0 18 18"><path d="M3.5 10.4A5 5 0 1 0 9.37 5.08" fill="none" stroke="#777" stroke-width="2.8"/><path d="M7 1.2H14.5L13 8.8Z" fill="#777"/></svg>
<div class="t" style="left:678.00px;top:13.70px;font-size:13px;color:#222;font-weight:normal;font-family:'Liberation Sans',sans-serif;">Presen</div>
<div class="a" style="left:10.5px;top:39.5px;width:59px;height:27.5px;background:#fcfcfc;border:1px solid #d0d0d0;border-bottom:none;border-radius:4px 4px 0 0"></div>
<div class="t" style="left:22.50px;top:47.93px;font-size:12.6px;color:#d24b1f;font-weight:bold;font-family:'Liberation Sans',sans-serif;">Home</div>
<div class="t" style="left:84.00px;top:47.93px;font-size:12.6px;color:#111;font-weight:bold;font-family:'Liberation Sans',sans-serif;">Insert</div>
<div class="t" style="left:144.00px;top:47.93px;font-size:12.6px;color:#111;font-weight:bold;font-family:'Liberation Sans',sans-serif;">Design</div>
<div class="t" style="left:212.50px;top:47.93px;font-size:12.6px;color:#111;font-weight:bold;font-family:'Liberation Sans',sans-serif;">Transitions</div>
<div class="t" style="left:304.00px;top:47.93px;font-size:12.6px;color:#111;font-weight:bold;font-family:'Liberation Sans',sans-serif;">Animations</div>
<div class="t" style="left:398.00px;top:47.93px;font-size:12.6px;color:#111;font-weight:bold;font-family:'Liberation Sans',sans-serif;">Slide Show</div>
<div class="t" style="left:492.50px;top:47.93px;font-size:12.6px;color:#111;font-weight:bold;font-family:'Liberation Sans',sans-serif;">Review</div>
<div class="t" style="left:561.50px;top:47.93px;font-size:12.6px;color:#111;font-weight:bold;font-family:'Liberation Sans',sans-serif;">View</div>
<div class="t" style="left:616.50px;top:47.93px;font-size:12.6px;color:#e4742c;font-weight:bold;font-family:'Liberation Sans',sans-serif;">Shape Format</div>
<div class="a" style="left:606px;top:62px;width:108px;height:4px;background:#e58a52;border-radius:2px 2px 0 0"></div>
<div class="a" style="left:0px;top:66px;width:720px;height:71px;background:#f7f7f7;border-top:1px solid #d6d6d6;border-bottom:1px solid #cdcdcd"></div>
<div class="a" style="left:11.5px;top:66px;width:57px;height:2px;background:#fafafa"></div>
<svg class="a" style="left:14px;top:72px;" width="26" height="31" viewBox="0 0 26 31"><rect x="0.5" y="4.5" width="19" height="25" rx="2" fill="#e8b35f" stroke="#cf9a45" stroke-width=".8"/><path d="M4 8V5Q4 3 6 3H7.5Q8 0.5 10 0.5Q12 0.5 12.5 3H14Q16 3 16 5V8Z" fill="#646464"/><path d="M8 13.5H19L24.5 19V30.5H8Z" fill="#fff" stroke="#bdbdbd" stroke-width=".9"/><path d="M19 13.5V19H24.5" fill="#eee" stroke="#bdbdbd" stroke-width=".9"/></svg>
<svg class="a" style="left:48px;top:87px;" width="5" height="3.5" viewBox="0 0 5 3.5"><path d="M0 0H5L2.5 3.5Z" fill="#333"/></svg>
<div class="t" style="left:17.00px;top:109.27px;font-size:10.9px;color:#111;font-weight:normal;font-family:'Liberation Sans',sans-serif;-webkit-text-stroke:.4px currentColor">Paste</div>
<svg class="a" style="left:66px;top:70px;" width="16" height="17" viewBox="0 0 16 17"><path d="M3 1L10.5 11M13 1L5.5 11" stroke="#8a8a8a" stroke-width="1.3"/><circle cx="4" cy="13.5" r="2.4" fill="none" stroke="#6aa6e0" stroke-width="1.1"/><circle cx="12" cy="13.5" r="2.4" fill="none" stroke="#6aa6e0" stroke-width="1.1"/></svg>
<div class="t" style="left:87.00px;top:71.69px;font-size:11px;color:#8c8c8c;font-weight:normal;font-family:'Liberation Sans',sans-serif;-webkit-text-stroke:.4px currentColor">Cut</div>
<svg class="a" style="left:65px;top:92px;" width="16" height="18" viewBox="0 0 16 18"><path d="M5.5 1H10L13.5 4.5V12.5H5.5Z" fill="#f6f6f6" stroke="#d0d0d0"/><path d="M1.5 5H6L9.5 8.5V16.5H1.5Z" fill="#f6f6f6" stroke="#d0d0d0"/></svg>
<div class="t" style="left:86.00px;top:94.49px;font-size:11px;color:#8c8c8c;font-weight:normal;font-family:'Liberation Sans',sans-serif;-webkit-text-stroke:.4px currentColor">Copy</div>
<svg class="a" style="left:119.5px;top:99px;" width="4.5" height="3" viewBox="0 0 4.5 3"><path d="M0 0H4.5L2.25 3Z" fill="#c2c2c2"/></svg>
<svg class="a" style="left:65px;top:116px;" width="18" height="16" viewBox="0 0 18 16"><path d="M11 5L14.5 1.5Q16 0.5 17 1.5Q18 2.5 17 4L13 7.5Z" fill="#f0ead8" stroke="#777" stroke-width=".8"/><path d="M6 7L10.5 3.5L14.5 7.5L10 11.5Z" fill="#d9d2bd" stroke="#777" stroke-width=".8"/><path d="M1 12L6 7L10 11.5L5 15.5Z" fill="#3b74c8"/></svg>
<div class="t" style="left:87.50px;top:118.27px;font-size:10.9px;color:#111;font-weight:normal;font-family:'Liberation Sans',sans-serif;-webkit-text-stroke:.4px currentColor">Format</div>
<div class="a" style="left:136px;top:72px;width:1px;height:60px;background:#e6e6e6"></div>
<svg class="a" style="left:146px;top:72px;" width="34" height="30" viewBox="0 0 34 30"><rect x="4.5" y="5.5" width="28" height="22" rx="2" fill="#fff" stroke="#c4c4c4" stroke-width="1.2"/><rect x="9" y="10" width="19" height="4" rx="1.5" fill="#d8d8d8"/><path d="M9 18.5H11M13 18.5H28M9 22H11M13 22H28" stroke="#9a9a9a" stroke-width="1"/><circle cx="8" cy="7" r="6" fill="#54ab54"/><path d="M8 3.8V10.2M4.8 7H11.2" stroke="#fff" stroke-width="2"/></svg>
<svg class="a" style="left:185.5px;top:87px;" width="5" height="3.8" viewBox="0 0 5 3.8"><path d="M0 0H5L2.5 3.8Z" fill="#333"/></svg>
<div class="t" style="left:157.50px;top:108.63px;font-size:10.6px;color:#111;font-weight:normal;font-family:'Liberation Sans',sans-serif;-webkit-text-stroke:.4px currentColor">New</div>
<div class="t" style="left:156.00px;top:120.83px;font-size:10.6px;color:#111;font-weight:normal;font-family:'Liberation Sans',sans-serif;-webkit-text-stroke:.4px currentColor">Slide</div>
<svg class="a" style="left:202px;top:77px;" width="20" height="18" viewBox="0 0 20 18"><rect x="1.5" y="1.5" width="17" height="15" rx="2" fill="#f3f3f3" stroke="#b9b9b9" stroke-width="1.1"/><rect x="4" y="4" width="12" height="3" rx="1" fill="#d0d0d0"/><rect x="4" y="9" width="4" height="5" fill="none" stroke="#c0c0c0" stroke-width=".9"/><path d="M10 10H16M10 12.5H15" stroke="#aaa" stroke-width="1"/></svg>
<div class="t" style="left:226.00px;top:79.90px;font-size:11.1px;color:#111;font-weight:normal;font-family:'Liberation Sans',sans-serif;-webkit-text-stroke:.4px currentColor">Layout</div>
<svg class="a" style="left:264.5px;top:84px;" width="4.5" height="3.5" viewBox="0 0 4.5 3.5"><path d="M0 0H4.5L2.25 3.5Z" fill="#444"/></svg>
<svg class="a" style="left:201px;top:105px;" width="21" height="20" viewBox="0 0 21 20"><rect x="3.5" y="8.5" width="16" height="10" rx="2" fill="#f3f3f3" stroke="#c2c2c2" stroke-width="1.1"/><rect x="6" y="11" width="11" height="3" rx="1" fill="#d6d6d6"/><path d="M13 1.5H18Q19.5 1.5 19.5 3V4Q19.5 5.5 18 5.5H13" fill="none" stroke="#7fb5e6" stroke-width="1.2"/><circle cx="6.2" cy="6.5" r="5.5" fill="#54ab54"/><path d="M6.2 3.6V9.4M3.3 6.5H9.1" stroke="#fff" stroke-width="1.8"/></svg>
<div class="t" style="left:226.00px;top:110.00px;font-size:11.1px;color:#111;font-weight:normal;font-family:'Liberation Sans',sans-serif;-webkit-text-stroke:.4px currentColor">Section</div>
<svg class="a" style="left:268.5px;top:114px;" width="4.5" height="3.5" viewBox="0 0 4.5 3.5"><path d="M0 0H4.5L2.25 3.5Z" fill="#444"/></svg>
<div class="a" style="left:285px;top:72px;width:1px;height:60px;background:#e6e6e6"></div>
<div class="a" style="left:294px;top:74px;width:141px;height:24px;background:#fff;border:1px solid #c9c9c9;border-radius:4px"></div>
<div class="a" style="left:420px;top:75px;width:1px;height:22px;background:#ececec"></div>
<div class="t" style="left:299.00px;top:79.56px;font-size:12.8px;color:#111;font-weight:normal;font-family:'Liberation Sans',sans-serif;-webkit-text-stroke:.2px #111">Calibri Light (Head…</div>
<svg class="a" style="left:425.5px;top:84px;" width="4.5" height="3.5" viewBox="0 0 4.5 3.5"><path d="M0 0H4.5L2.25 3.5Z" fill="#555"/></svg>
<div class="a" style="left:439px;top:74px;width:48px;height:24px;background:#fff;border:1px solid #c9c9c9;border-radius:4px"></div>
<div class="a" style="left:472px;top:75px;width:1px;height:22px;background:#ececec"></div>
<div class="t" style="left:443.80px;top:79.56px;font-size:12.8px;color:#111;font-weight:normal;font-family:'Liberation Sans',sans-serif;-webkit-text-stroke:.2px #111">60</div>
<svg class="a" style="left:477px;top:84px;" width="4.5" height="3.5" viewBox="0 0 4.5 3.5"><path d="M0 0H4.5L2.25 3.5Z" fill="#555"/></svg>
<div class="a" style="left:491px;top:74px;width:59px;height:24px;background:linear-gradient(#fdfdfd,#f3f3f3);border:1px solid #cfcfcf;border-radius:4px;"></div>
<div class="a" style="left:520.5px;top:75px;width:1px;height:22px;background:#dedede"></div>
<div class="t" style="left:496.30px;top:78.09px;font-size:14.9px;color:#111;font-weight:normal;font-family:'Liberation Sans',sans-serif;-webkit-text-stroke:.35px #111">A</div>
<svg class="a" style="left:509px;top:84px;" width="8" height="4" viewBox="0 0 8 4"><path d="M0 4L4 0L8 4Z" fill="#2a7fd8"/></svg>
<div class="t" style="left:526.30px;top:81.56px;font-size:10.8px;color:#111;font-weight:normal;font-family:'Liberation Sans',sans-serif;-webkit-text-stroke:.3px #111">A</div>
<svg class="a" style="left:537px;top:85px;" width="8" height="4" viewBox="0 0 8 4"><path d="M0 0H8L4 4Z" fill="#2a7fd8"/></svg>
<div class="a" style="left:554px;top:74px;width:30px;height:24px;background:linear-gradient(#fdfdfd,#f3f3f3);border:1px solid #cfcfcf;border-radius:4px;"></div>
<div class="t" style="left:559.50px;top:77.62px;font-size:12.5px;color:#222;font-weight:normal;font-family:'Liberation Sans',sans-serif;-webkit-text-stroke:.3px #222">A</div>
<svg class="a" style="left:561px;top:79px;" width="20" height="16" viewBox="0 0 20 16"><path d="M3 11L11 3Q12.5 1.8 14 3L17 6Q18 7.5 16.8 8.8L9 15Q7.5 16 6 15L3 12Q2 11.5 3 11Z" fill="#d77a9a" stroke="#9c4866" stroke-width=".8"/><path d="M6.5 9.5L12 14" stroke="#9c4866" stroke-width=".7"/></svg>
<div class="a" style="left:294px;top:104px;width:247px;height:24px;background:linear-gradient(#fdfdfd,#f3f3f3);border:1px solid #cfcfcf;border-radius:4px;"></div>
<div class="a" style="left:323px;top:105px;width:1px;height:22px;background:#dedede"></div>
<div class="a" style="left:352px;top:105px;width:1px;height:22px;background:#dedede"></div>
<div class="a" style="left:381px;top:105px;width:1px;height:22px;background:#dedede"></div>
<div class="a" style="left:410.5px;top:105px;width:1px;height:22px;background:#dedede"></div>
<div class="a" style="left:439px;top:105px;width:1px;height:22px;background:#dedede"></div>
<div class="a" style="left:469px;top:105px;width:1px;height:22px;background:#dedede"></div>
<div class="a" style="left:504.5px;top:105px;width:1px;height:22px;background:#dedede"></div>
<div class="t" style="left:304.80px;top:109.02px;font-size:13.8px;color:#222;font-weight:bold;font-family:'Liberation Sans',sans-serif;">B</div>
<div class="t" style="left:334.00px;top:108.85px;font-size:14px;color:#222;font-weight:bold;font-family:'Liberation Serif',serif;font-style:italic">I</div>
<div class="t" style="left:361.30px;top:109.49px;font-size:13.6px;color:#222;font-weight:normal;font-family:'Liberation Sans',sans-serif;-webkit-text-stroke:.35px #222">U</div>
<div class="a" style="left:362px;top:122.3px;width:10px;height:1.2px;background:#222"></div>
<div class="t" style="left:386.50px;top:110.34px;font-size:12px;color:#333;font-weight:normal;font-family:'Liberation Sans',sans-serif;letter-spacing:-.6px">abc</div>
<div class="a" style="left:386px;top:116px;width:19px;height:1px;background:#333"></div>
<div class="t" style="left:417.50px;top:111.22px;font-size:12.5px;color:#111;font-weight:normal;font-family:'Liberation Sans',sans-serif;-webkit-text-stroke:.3px #111">X</div>
<div class="t" style="left:427.30px;top:108.52px;font-size:8.6px;color:#2a7fd8;font-weight:bold;font-family:'Liberation Sans',sans-serif;">2</div>
<div class="t" style="left:447.00px;top:108.42px;font-size:12.5px;color:#111;font-weight:normal;font-family:'Liberation Sans',sans-serif;-webkit-text-stroke:.3px #111">X</div>
<div class="t" style="left:456.40px;top:114.52px;font-size:8.6px;color:#2a7fd8;font-weight:bold;font-family:'Liberation Sans',sans-serif;">2</div>
<div class="t" style="left:475.50px;top:107.67px;font-size:9.6px;color:#333;font-weight:normal;font-family:'Liberation Sans',sans-serif;letter-spacing:.3px;-webkit-text-stroke:.3px #333">A V</div>
<svg class="a" style="left:475px;top:117px;" width="17" height="6" viewBox="0 0 17 6"><path d="M1.5 3H15.5" stroke="#2a7fd8" stroke-width="1.2"/><path d="M0 3L3.5 0.5V5.5Z M17 3L13.5 0.5V5.5Z" fill="#2a7fd8"/></svg>
<svg class="a" style="left:496.5px;top:114px;" width="4.5" height="3.5" viewBox="0 0 4.5 3.5"><path d="M0 0H4.5L2.25 3.5Z" fill="#444"/></svg>
<div class="t" style="left:510.50px;top:111.22px;font-size:12.5px;color:#111;font-weight:normal;font-family:'Liberation Sans',sans-serif;-webkit-text-stroke:.3px #111">A</div>
<div class="t" style="left:519.00px;top:112.91px;font-size:10.5px;color:#111;font-weight:normal;font-family:'Liberation Sans',sans-serif;-webkit-text-stroke:.3px #111">a</div>
<svg class="a" style="left:514px;top:106px;" width="11" height="7" viewBox="0 0 11 7"><path d="M1 6Q3 1.5 8 2" fill="none" stroke="#2a7fd8" stroke-width="1.6"/><path d="M6.5 0L10.5 2.2L7 5Z" fill="#2a7fd8"/></svg>
<svg class="a" style="left:532px;top:114px;" width="4.5" height="3.5" viewBox="0 0 4.5 3.5"><path d="M0 0H4.5L2.25 3.5Z" fill="#444"/></svg>
<div class="a" style="left:545px;top:104px;width:39px;height:24px;background:linear-gradient(#fdfdfd,#f3f3f3);border:1px solid #cfcfcf;border-radius:4px;"></div>
<div class="a" style="left:571px;top:105px;width:1px;height:22px;background:#dedede"></div>
<div class="t" style="left:554.00px;top:106.42px;font-size:12.5px;color:#111;font-weight:normal;font-family:'Liberation Sans',sans-serif;-webkit-text-stroke:.3px #111">A</div>
<div class="a" style="left:550px;top:120px;width:18px;height:5px;background:#e3170d;border-radius:1px"></div>
<svg class="a" style="left:575.5px;top:114px;" width="4.5" height="3.5" viewBox="0 0 4.5 3.5"><path d="M0 0H4.5L2.25 3.5Z" fill="#444"/></svg>
<div class="a" style="left:592.5px;top:72px;width:1px;height:60px;background:#e6e6e6"></div>
<div class="a" style="left:601px;top:74px;width:79px;height:24px;background:linear-gradient(#fdfdfd,#f3f3f3);border:1px solid #cfcfcf;border-radius:4px;"></div>
<div class="a" style="left:628px;top:75px;width:1px;height:22px;background:#dedede"></div>
<div class="a" style="left:640.5px;top:75px;width:1px;height:22px;background:#dedede"></div>
<div class="a" style="left:667.5px;top:75px;width:1px;height:22px;background:#dedede"></div>
<svg class="a" style="left:606px;top:78px;" width="17" height="16" viewBox="0 0 17 16"><circle cx="2" cy="2.5" r="1.6" fill="#2a6cc8"/><circle cx="2" cy="7.5" r="1.6" fill="#2a6cc8"/><circle cx="2" cy="12.5" r="1.6" fill="#2a6cc8"/><path d="M5.5 2.5H15M5.5 7.5H15M5.5 12.5H15" stroke="#222" stroke-width="1.1"/></svg>
<svg class="a" style="left:632px;top:84px;" width="5" height="3.5" viewBox="0 0 5 3.5"><path d="M0 0H5L2.5 3.5Z" fill="#333"/></svg>
<svg class="a" style="left:645px;top:78px;" width="17" height="16" viewBox="0 0 17 16"><text x="0" y="5" font-family="Liberation Sans" font-weight="bold" font-size="6.2" fill="#2a6cc8">1</text><text x="0" y="10" font-family="Liberation Sans" font-weight="bold" font-size="6.2" fill="#2a6cc8">2</text><text x="0" y="15" font-family="Liberation Sans" font-weight="bold" font-size="6.2" fill="#2a6cc8">3</text><path d="M5 2.5H15M5 7.5H15M5 12.5H15" stroke="#222" stroke-width="1.1"/></svg>
<svg class="a" style="left:671px;top:84px;" width="5" height="3.5" viewBox="0 0 5 3.5"><path d="M0 0H5L2.5 3.5Z" fill="#333"/></svg>
<div class="a" style="left:684px;top:74px;width:60px;height:24px;background:linear-gradient(#fdfdfd,#f3f3f3);border:1px solid #cfcfcf;border-radius:4px;"></div>
<div class="a" style="left:713.5px;top:75px;width:1px;height:22px;background:#dedede"></div>
<svg class="a" style="left:689px;top:78px;" width="20" height="16" viewBox="0 0 20 16"><path d="M8 2.5H19M10 5.5H19M10 8.5H19M8 11.5H19" stroke="#bdbdbd" stroke-width=".9"/><path d="M0.5 7.5L5 3.5V11.5Z" fill="#a9cdee"/><rect x="4" y="5.5" width="3" height="4" fill="#a9cdee"/></svg>
<div class="a" style="left:601px;top:104px;width:117px;height:24px;background:linear-gradient(#fdfdfd,#f3f3f3);border:1px solid #cfcfcf;border-radius:4px;"></div>
<div class="a" style="left:630.5px;top:105px;width:29px;height:22px;background:#dcdcdc"></div>
<div class="a" style="left:630.5px;top:105px;width:1px;height:22px;background:#d4d4d4"></div>
<div class="a" style="left:659.5px;top:105px;width:1px;height:22px;background:#d4d4d4"></div>
<div class="a" style="left:688.5px;top:105px;width:1px;height:22px;background:#d4d4d4"></div>
<svg class="a" style="left:608px;top:108px;" width="16" height="16" viewBox="0 0 16 16"><path d="M1 3.5H13M1 6.6H9M1 9.7H16M1 12.8H12" stroke="#2a2a2a" stroke-width="1.1"/></svg>
<svg class="a" style="left:637px;top:108px;" width="16" height="16" viewBox="0 0 16 16"><path d="M1 3.5H15M4 6.6H12M1 9.7H15M3 12.8H13" stroke="#2a2a2a" stroke-width="1.1"/></svg>
<svg class="a" style="left:666px;top:108px;" width="16" height="16" viewBox="0 0 16 16"><path d="M3 3.5H15M7 6.6H15M0 9.7H15M4 12.8H15" stroke="#2a2a2a" stroke-width="1.1"/></svg>
<svg class="a" style="left:695px;top:108px;" width="16" height="16" viewBox="0 0 16 16"><path d="M0 3.5H14M0 6.6H14M0 9.7H14M0 12.8H14" stroke="#2a2a2a" stroke-width="1.1"/></svg>
<div class="a" style="left:0px;top:137px;width:226px;height:736px;background:#f5f5f5"></div>
<div class="a" style="left:226px;top:137px;width:2px;height:736px;background:#c8c8c8"></div>
<div class="t" style="left:15.80px;top:151.27px;font-size:11.5px;color:#555;font-weight:normal;font-family:'Liberation Sans',sans-serif;-webkit-text-stroke:.45px #555">1</div>
<div class="a" style="left:29px;top:144.5px;width:181px;height:104.5px;background:#fff;border:3px solid #d2502a"></div>
<div class="t" style="left:108.80px;top:187.67px;font-size:10.2px;color:#333;font-weight:normal;font-family:'Liberation Sans',sans-serif;-webkit-text-stroke:.3px #333">2016</div>
<div class="a" style="left:228px;top:137px;width:492px;height:696px;background:linear-gradient(90deg,#fdfdfd,#f8f8f8 8px)"></div>
<div class="a" style="left:252px;top:157px;width:480px;height:655px;background:#fff;border:1px solid #d9d9d9;box-shadow:0 0 14px 4px rgba(0,0,0,.06)"></div>
<div class="a" style="left:397px;top:264px;width:330px;height:229px;border:1px solid #8a8a8a"></div>
<svg class="a" style="left:393px;top:260px;" width="9" height="9" viewBox="0 0 9 9"><rect x="0.5" y="0.5" width="8" height="8" rx="2" fill="#fafafa" stroke="#8a8a8a"/></svg>
<svg class="a" style="left:393px;top:374px;" width="9" height="9" viewBox="0 0 9 9"><rect x="0.5" y="0.5" width="8" height="8" rx="2" fill="#fafafa" stroke="#8a8a8a"/></svg>
<svg class="a" style="left:393px;top:488px;" width="9" height="9" viewBox="0 0 9 9"><rect x="0.5" y="0.5" width="8" height="8" rx="2" fill="#fafafa" stroke="#8a8a8a"/></svg>
<div class="a" style="left:398px;top:501px;width:330px;height:158px;border:1px solid #c6c6c6"></div>
<svg class="a" style="left:717px;top:513px;" width="3" height="14" viewBox="0 0 3 14"><ellipse cx="6" cy="7" rx="5.5" ry="6.2" fill="none" stroke="#000" stroke-width="2.2"/></svg>
<div class="a" style="left:228px;top:833px;width:492px;height:40px;background:#fff;border-top:1px solid #c4c4c4"></div>
<div class="t" style="left:235.00px;top:840.71px;font-size:13.1px;color:#111;font-weight:normal;font-family:'Liberation Sans',sans-serif;-webkit-text-stroke:.4px currentColor">Click to add notes</div>
<div class="a" style="left:0px;top:873px;width:720px;height:27px;background:#dd5c30"></div>
<div class="t" style="left:16.00px;top:881.83px;font-size:12.6px;color:#f9dcd0;font-weight:normal;font-family:'Liberation Sans',sans-serif;">Slide 1 of 1</div>
</div>
</body></html>
